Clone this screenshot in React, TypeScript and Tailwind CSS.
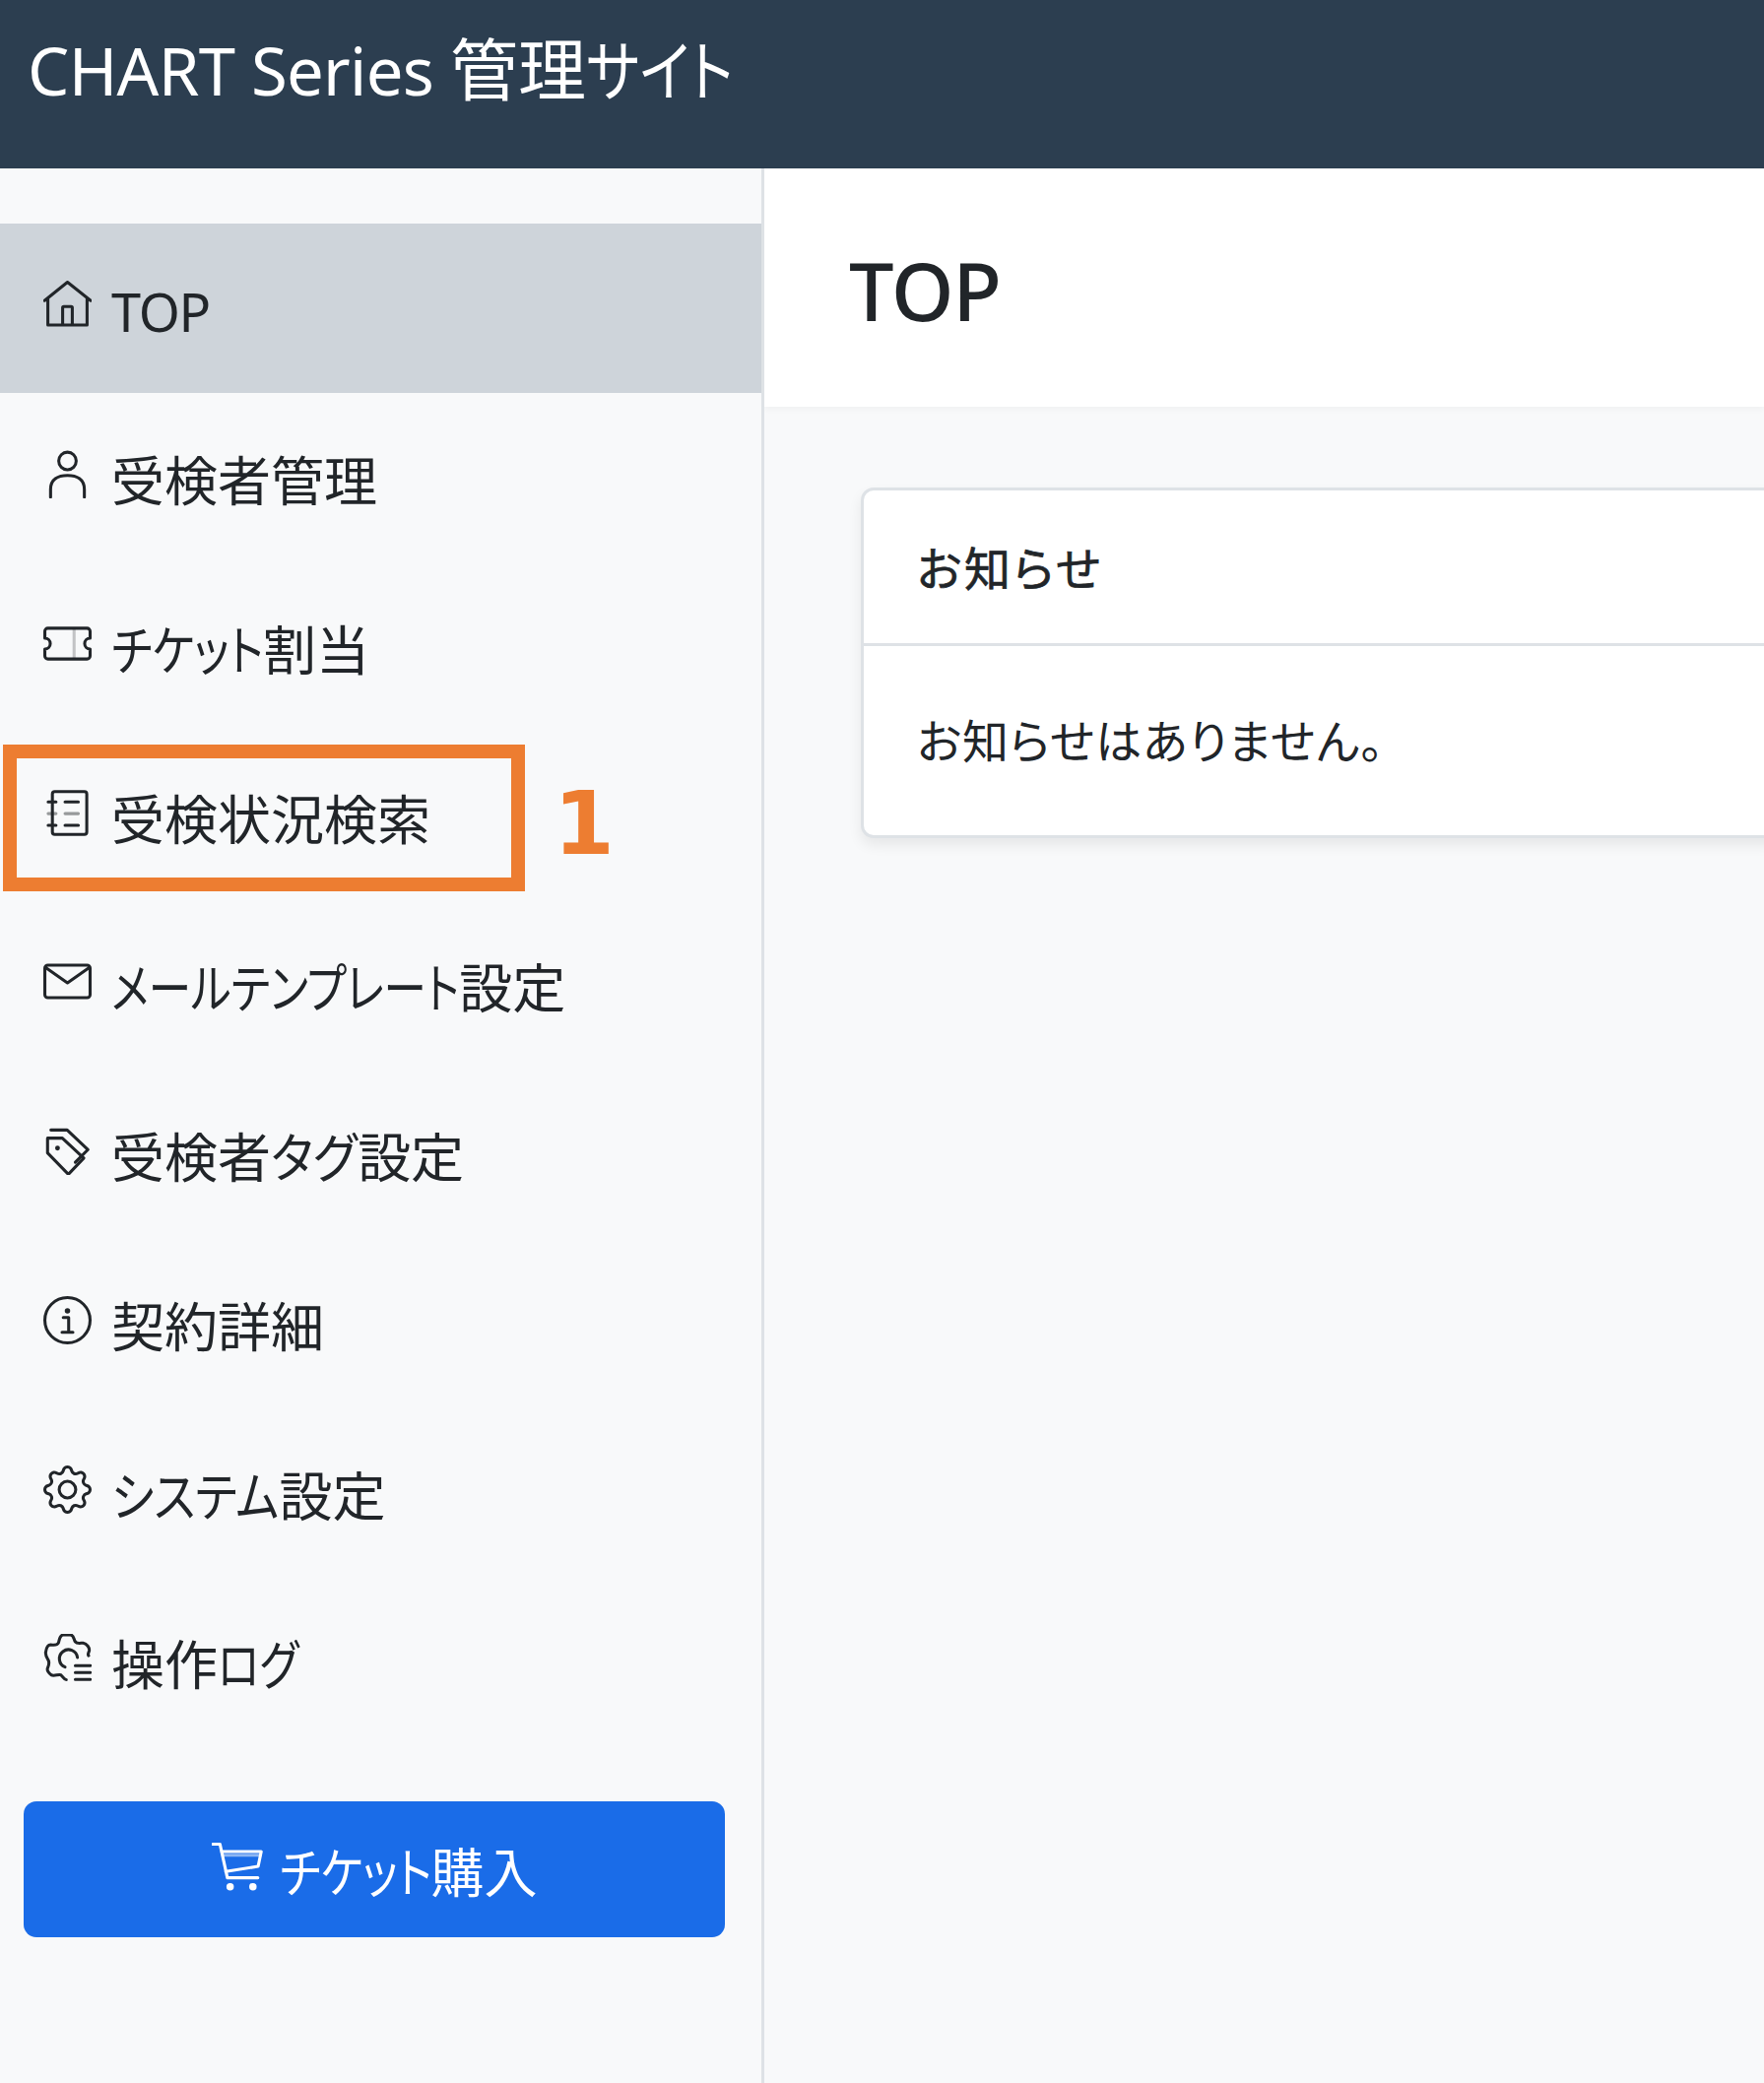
import type { ReactNode } from 'react'
import { BsGear } from 'react-icons/bs'

type IconProps = { className?: string }

const line = { fill: 'none', stroke: 'currentColor', strokeLinecap: 'round', strokeLinejoin: 'round' } as const

function HomeIcon({ className }: IconProps) {
  return (
    <svg viewBox="0 0 16 16" {...line} className={className}>
      <path d="M.4 6.6L8 .5l7.7 6.1M1.5 5.8v8.9h13V5.8M6.4 14.7V9a.4.4 0 0 1 .4-.4h2.4a.4.4 0 0 1 .4.4v5.7" />
    </svg>
  )
}

function PersonIcon({ className }: IconProps) {
  return (
    <svg viewBox="0 0 16 16" {...line} className={className}>
      <circle cx="8" cy="3.6" r="2.9" />
      <path d="M2.4 15.6V13c0-3.4 2.6-4.6 5.6-4.6s5.6 1.2 5.6 4.6v2.6" />
    </svg>
  )
}

function TicketIcon({ className }: IconProps) {
  return (
    <svg viewBox="0 0 16 16" {...line} className={className}>
      <path d="M1.5 2.9h13a1 1 0 0 1 1 1v2.3a1.8 1.8 0 0 0 0 3.6v2.3a1 1 0 0 1-1 1h-13a1 1 0 0 1-1-1V9.8a1.8 1.8 0 0 0 0-3.6V3.9a1 1 0 0 1 1-1z" />
      <path d="M10.2 3.4v9.2" strokeOpacity="0.25" />
    </svg>
  )
}

function JournalIcon({ className }: IconProps) {
  return (
    <svg viewBox="0 0 16 16" {...line} className={className}>
      <rect x="3" y="0.9" width="11.4" height="14.2" rx="0.8" />
      <path d="M1.6 4.3h2.6M1.6 12.1h2.6M7.2 4.3h4.4M7.2 12.1h4.4" />
      <path d="M1.6 8.2h2.6M7.2 8.2h4.4" strokeOpacity="0.45" />
    </svg>
  )
}

function MailIcon({ className }: IconProps) {
  return (
    <svg viewBox="0 0 16 16" {...line} className={className}>
      <rect x="0.5" y="2.6" width="15" height="10.8" rx="1" />
      <path d="M.8 3.4L8 8.5l7.2-5.1" />
    </svg>
  )
}

function TagsIcon({ className }: IconProps) {
  return (
    <svg viewBox="0 0 16 16" {...line} className={className}>
      <path d="M2.5 1.1h5.4l6.9 6.5-4.2 4.2" />
      <path d="M1.4 3.8h4.9l7.1 6.6-5.1 5.4-6.9-7.1z" />
      <circle cx="4.7" cy="7.1" r="0.8" fill="currentColor" stroke="none" />
    </svg>
  )
}

function InfoIcon({ className }: IconProps) {
  return (
    <svg viewBox="0 0 16 16" {...line} className={className}>
      <circle cx="8" cy="8" r="7.5" />
      <circle cx="8" cy="4.9" r="0.9" fill="currentColor" stroke="none" />
      <path d="M6.6 7.1h1.8v4.7M6.2 12h3.6" />
    </svg>
  )
}

function GearLogIcon({ className }: IconProps) {
  return (
    <svg viewBox="0 0 16 16" {...line} className={className}>
      <path d="M7.6 15.2C6.8 15.2 6.6 14.2 5.8 13.6C5 13.2 3.6 14.2 2.6 13.6C1.4 12.6 1.2 12 1.4 11.4C1.8 10.4 2.2 9.6 1.6 8.6C1 7.6 .6 7 .8 6C1 4.6 1.4 3.6 2.4 3.6C3.6 3.8 4.6 3.8 5 3C5.4 1.8 5.4 .4 6.6 .3L9 .3C10.2 .4 10 1.8 10.6 2.6C11.2 3.4 12.4 3 13.2 3C14.4 3.2 15.4 4.6 15.2 5.6C15 6.4 14.6 6.6 15 7.2" />
      <path d="M11.3 7.8A3 3 0 1 0 7.2 11" />
      <path d="M10.6 10.5h5M10.6 12.8h5M10.6 15.1h5" />
    </svg>
  )
}

function CartIcon({ className }: IconProps) {
  return (
    <svg viewBox="0 0 16.5 16" {...line} className={className}>
      <path d="M.3.8h2.3l2.4 10.9h9.9" />
      <path d="M3.2 3.2H16l-1 4.8-10.5 1.7" />
      <path d="M3.5 4.4h12.2" strokeOpacity="0.5" />
      <circle cx="5.9" cy="14.6" r="1.2" fill="currentColor" stroke="none" />
      <circle cx="13.3" cy="14.6" r="1.2" fill="currentColor" stroke="none" />
    </svg>
  )
}

// the kana in the picture are narrower than Noto's, so they get squeezed
function Kana({ className, children }: { className: string; children: ReactNode }) {
  return <span className={`inline-block origin-left ${className}`}>{children}</span>
}

const icon = 'h-[49px] w-[49px]'

const navItems: { label: ReactNode; icon: ReactNode }[] = [
  { label: <span className="tracking-[-1.3px]">TOP</span>, icon: <HomeIcon className={icon} /> },
  { label: '受検者管理', icon: <PersonIcon className={icon} /> },
  {
    label: (
      <>
        <Kana className="mr-[-30px] scale-x-[0.84]">チケット</Kana>割当
      </>
    ),
    icon: <TicketIcon className={icon} />,
  },
  { label: '受検状況検索', icon: <JournalIcon className={icon} /> },
  {
    label: (
      <>
        <Kana className="mr-[-85px] scale-x-[0.806]">メールテンプレート</Kana>設定
      </>
    ),
    icon: <MailIcon className={icon} />,
  },
  {
    label: (
      <>
        受検者<Kana className="mr-[-8px] scale-x-[0.91]">タグ</Kana>設定
      </>
    ),
    icon: <TagsIcon className={icon} />,
  },
  { label: '契約詳細', icon: <InfoIcon className={icon} /> },
  {
    label: (
      <>
        <Kana className="mr-[-26px] scale-x-[0.865]">システム</Kana>設定
      </>
    ),
    icon: <BsGear className={icon} />,
  },
  {
    label: (
      <>
        操作<Kana className="mr-[-19px] scale-x-[0.81]">ログ</Kana>
      </>
    ),
    icon: <GearLogIcon className={icon} />,
  },
]

export default function App() {
  return (
    <div className="flex h-[2115px] flex-col overflow-hidden bg-[#f8f9fa] font-['Noto_Sans','Noto_Sans_CJK_JP',sans-serif] text-[#212529] [font-feature-settings:'palt']">
      <header className="h-[171px] shrink-0 bg-[#2c3e50] pl-[28px] pt-[24px] text-[67px] leading-[92px] font-normal text-white">
        <span className="tracking-[-0.7px]">CHART Series </span>
        <span className="text-[69px]">管理</span>
        <Kana className="mr-[-26px] scale-x-[0.86]">サイト</Kana>
      </header>

      <div className="flex flex-1">
        {/* sidebar */}
        <aside className="relative w-[776px] shrink-0 border-r-[3px] border-[#dee2e6] pt-[56px]">
          <nav className="flex flex-col">
            {navItems.map((item, i) => (
              <a
                key={i}
                className={`flex h-[171.75px] items-center pl-[44px] text-[54px] ${i === 0 ? 'bg-[#ced4da]' : ''}`}
              >
                <span className="-mt-[6px] flex w-[69px] shrink-0">{item.icon}</span>
                <span className="mt-[8px]">{item.label}</span>
              </a>
            ))}
          </nav>

          <button className="mx-[24px] mt-[56px] flex h-[138px] w-[712px] items-center justify-center rounded-[13px] bg-[#1a6ce8] text-[54px] text-white">
            <CartIcon className="mr-[17px] -mt-[6px] h-[50px] w-[52px]" />
            <span className="mt-[8px]">
              <Kana className="mr-[-30px] scale-x-[0.84]">チケット</Kana>購入
            </span>
          </button>

          {/* annotation */}
          <div className="absolute left-[3px] top-[585px] h-[149px] w-[530px] border-[14px] border-[#ed7d31]" />
          <span className="absolute left-[562px] top-[610px] font-['DejaVu_Sans',sans-serif] text-[89px] font-bold leading-[110px] text-[#ed7d31]">
            1
          </span>
        </aside>

        {/* content */}
        <main className="min-w-0 flex-1">
          <div className="flex h-[242px] items-center bg-white pl-[86px] pt-[5px] text-[81px] font-medium tracking-[-1px] shadow-[0_3px_6px_rgba(0,0,0,0.03)]">
            TOP
          </div>

          <section className="ml-[98px] mr-[-20px] mt-[82px] rounded-[13px] border-[3px] border-[#dee2e6] bg-white shadow-[0_7px_14px_rgba(0,0,0,0.075)]">
            <h2 className="flex h-[158px] items-center border-b-[3px] border-[#dee2e6] pl-[54px] pt-[4px] text-[47px] font-normal tracking-[3px] [-webkit-text-stroke:0.7px_#212529]">
              お知らせ
            </h2>
            <p className="flex h-[192px] items-center pl-[54px] text-[47px] tracking-[1px]">
              お知らせはありません。
            </p>
          </section>
        </main>
      </div>
    </div>
  )
}
